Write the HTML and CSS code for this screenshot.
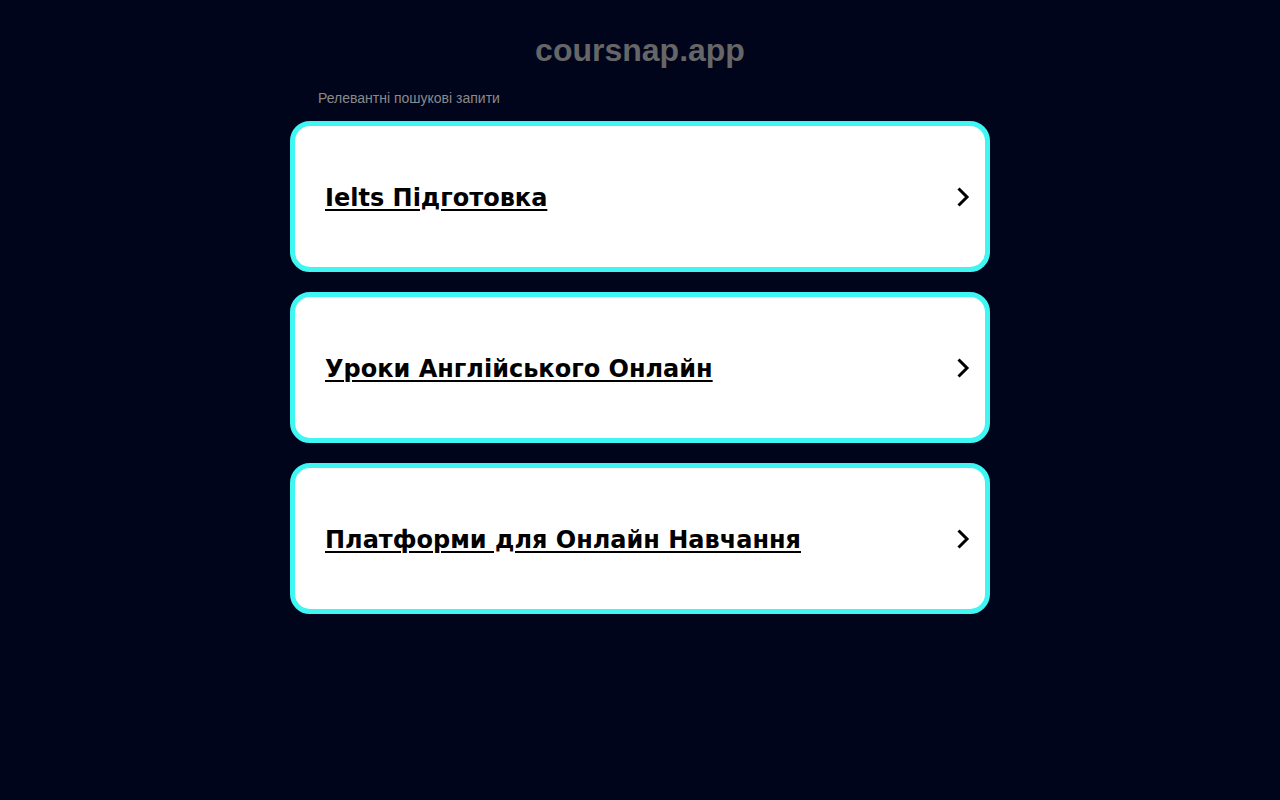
FILE: index.html
```html
<!DOCTYPE html>
<html lang="uk">

<head>
    <meta charset="UTF-8">
    <meta name="viewport" content="width=device-width, initial-scale=1.0">
    <title>coursnap.app</title>
    <link rel="stylesheet" href="styles.css">
</head>

<body>
    <!-- шапка -->
    <div class="header">
        <h1 class="domain">coursnap.app</h1>
    </div>

    <!-- список запитів -->
    <div class="container">
        <p class="caption">Релевантні пошукові запити</p>
        <ul class="links">
            <li>
                <a href="#" class="card">
                    <span class="card-text">Ielts Підготовка</span>
                    <svg class="chevron" width="14" height="20" viewBox="0 0 14 20">
                        <path d="M2.5 1.5 L11 10 L2.5 18.5" fill="none" stroke="#000" stroke-width="3" />
                    </svg>
                </a>
            </li>
            <li>
                <a href="#" class="card">
                    <span class="card-text">Уроки Англійського Онлайн</span>
                    <svg class="chevron" width="14" height="20" viewBox="0 0 14 20">
                        <path d="M2.5 1.5 L11 10 L2.5 18.5" fill="none" stroke="#000" stroke-width="3" />
                    </svg>
                </a>
            </li>
            <li>
                <a href="#" class="card">
                    <span class="card-text">Платформи для Онлайн Навчання</span>
                    <svg class="chevron" width="14" height="20" viewBox="0 0 14 20">
                        <path d="M2.5 1.5 L11 10 L2.5 18.5" fill="none" stroke="#000" stroke-width="3" />
                    </svg>
                </a>
            </li>
        </ul>
    </div>
</body>

</html>
```

FILE: styles.css
```css
* {
    margin: 0;
    padding: 0;
    box-sizing: border-box;
}

li {
    list-style: none;
}

body {
    background: #00051c;
    font-family: "Liberation Sans", Arial, sans-serif;
}

.header {
    padding-top: 31px;
    text-align: center;
}

.domain {
    font-size: 32px;
    font-weight: bold;
    line-height: 38px;
    color: #666;
}

.container {
    width: 700px;
    margin: 0 auto;
}

.caption {
    margin-top: 20px;
    padding-left: 28px;
    font-size: 14px;
    line-height: 18px;
    color: #8a8a8a;
}

.links {
    margin-top: 14px;
    display: flex;
    flex-direction: column;
    gap: 20px;
}

.card {
    display: flex;
    align-items: center;
    justify-content: space-between;
    height: 151px;
    padding: 0 15px 0 30px;
    background: #fff;
    border: 5px solid #3ff6f2;
    border-radius: 20px;
    color: #000;
    text-decoration: none;
}

.card-text {
    padding-top: 2px;
    font-family: "DejaVu Sans", Verdana, sans-serif;
    font-size: 24px;
    font-weight: bold;
    text-decoration: underline;
    text-decoration-thickness: 2px;
    text-underline-offset: 3px;
}

.chevron {
    display: block;
}
```
